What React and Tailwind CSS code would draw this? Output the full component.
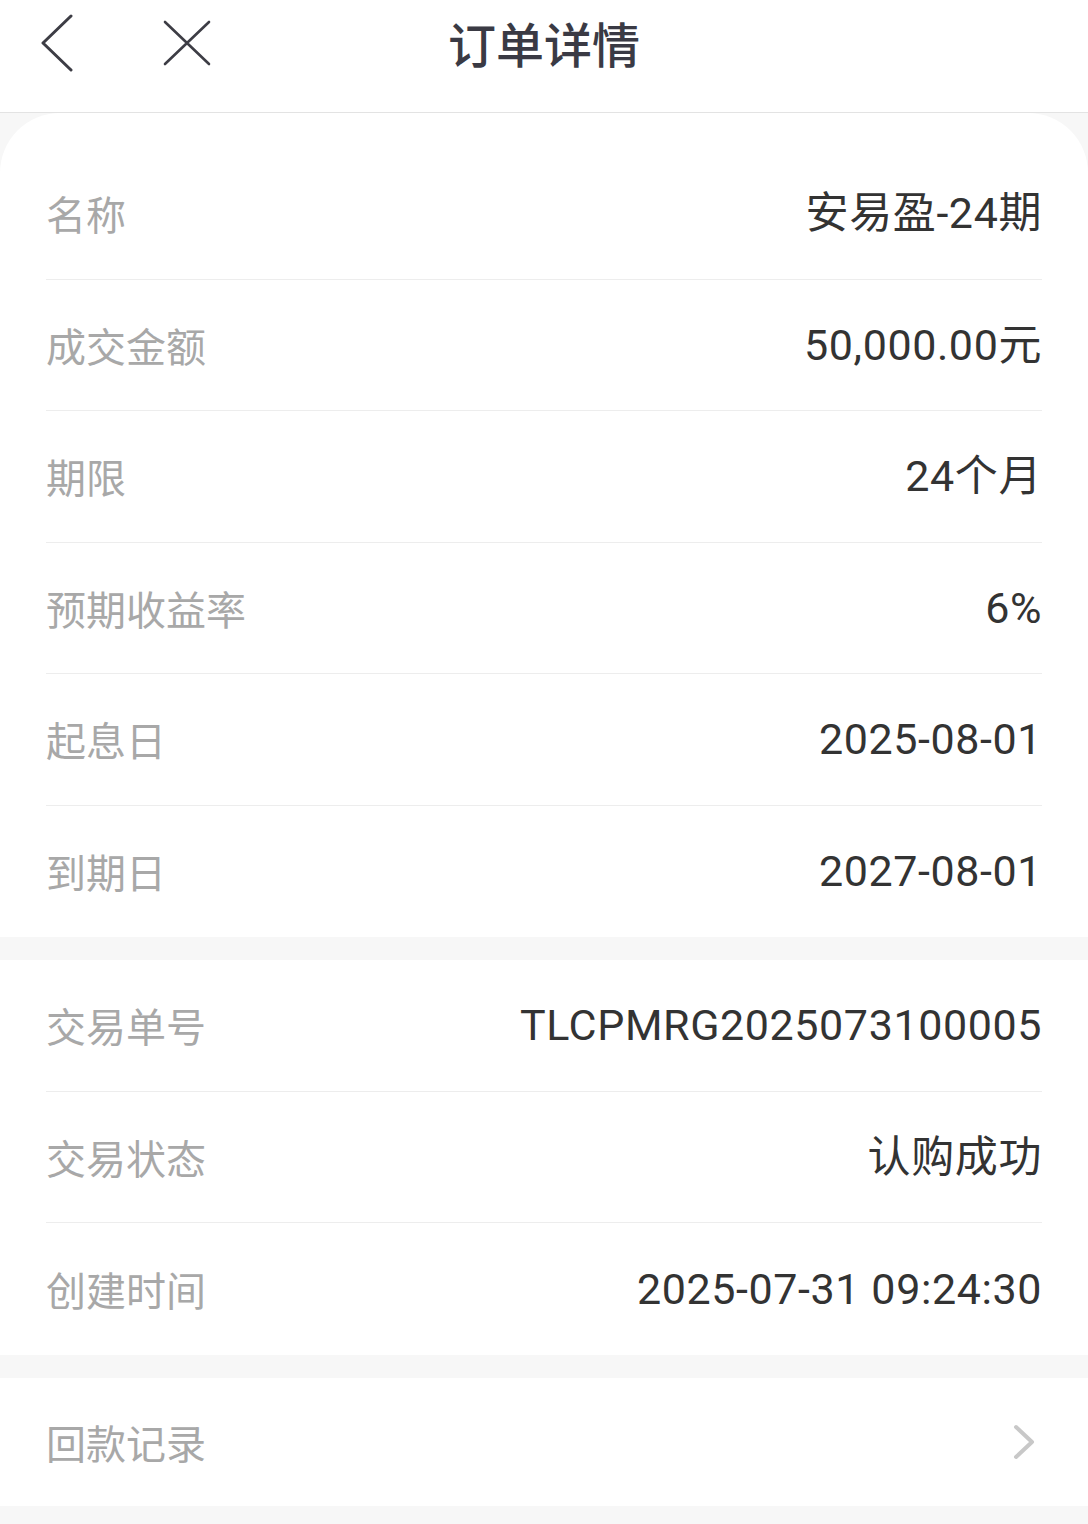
import React from "react";

const font = { fontFamily: '"Noto Sans CJK SC", "Noto Sans", sans-serif' };

function Row({ label, value, last }) {
  return (
    <div className="px-[46px]">
      <div className={`flex h-[131.5px] items-center justify-between ${last ? "" : "border-b border-[#ededed]"}`}>
        <span className="text-[40px] text-[#a8a8a8]">{label}</span>
        <span className="font-['Roboto','Noto_Sans_CJK_SC',sans-serif] text-[43px] tracking-[0.6px] text-[#333333]">{value}</span>
      </div>
    </div>
  );
}

export default function App() {
  const sec1 = [
    ["名称", "安易盈-24期"],
    ["成交金额", "50,000.00元"],
    ["期限", "24个月"],
    ["预期收益率", "6%"],
    ["起息日", "2025-08-01"],
    ["到期日", "2027-08-01"],
  ];
  const sec2 = [
    ["交易单号", "TLCPMRG2025073100005"],
    ["交易状态", "认购成功"],
    ["创建时间", "2025-07-31 09:24:30"],
  ];
  return (
    <div className="min-h-[1524px] w-[1088px] bg-[#f7f7f7]" style={font}>
      <div className="relative flex h-[113px] items-center justify-center border-b border-[#e3e3e3] bg-white">
        <svg className="absolute left-[40px] top-[14px]" width="34" height="58" viewBox="0 0 34 58" fill="none">
          <path d="M31 2 L3 29 L31 56" stroke="#3d3d45" strokeWidth="3" strokeLinecap="round" strokeLinejoin="round" />
        </svg>
        <svg className="absolute left-[163px] top-[20px]" width="48" height="46" viewBox="0 0 48 46" fill="none">
          <path d="M2 2 L46 44 M46 2 L2 44" stroke="#3d3d45" strokeWidth="2.6" strokeLinecap="round" />
        </svg>
        <span className="-mt-[28px] text-[48px] font-medium text-[#3a3a44]">订单详情</span>
      </div>
      <div className="rounded-t-[60px] bg-white pt-[35px]">
        {sec1.map(([l, v], i) => (
          <Row key={l} label={l} value={v} last={i === sec1.length - 1} />
        ))}
      </div>
      <div className="mt-[23px] bg-white">
        {sec2.map(([l, v], i) => (
          <Row key={l} label={l} value={v} last={i === sec2.length - 1} />
        ))}
      </div>
      <div className="mt-[23px] flex h-[128px] items-center justify-between bg-white px-[46px]">
        <span className="text-[40px] text-[#a8a8a8]">回款记录</span>
        <svg className="mr-[6px]" width="24" height="36" viewBox="0 0 24 36" fill="none">
          <path d="M4 3 L20 18 L4 33" stroke="#c8c8c8" strokeWidth="4" strokeLinecap="round" strokeLinejoin="round" />
        </svg>
      </div>
    </div>
  );
}
